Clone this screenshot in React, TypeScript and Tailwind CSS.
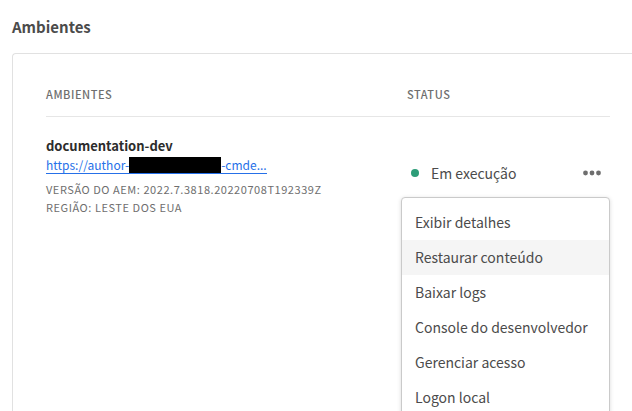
const menuItems = [
  "Exibir detalhes",
  "Restaurar conteúdo",
  "Baixar logs",
  "Console do desenvolvedor",
  "Gerenciar acesso",
  "Logon local",
];

function ActionMenu() {
  return (
    <div className="relative flex">
      <button
        type="button"
        aria-label="Mais ações"
        aria-haspopup="menu"
        aria-expanded="true"
        className="flex h-8 w-9 items-center justify-center"
      >
        <svg viewBox="0 0 20 6" className="h-[6px] w-5 fill-[#6e6e6e]" aria-hidden="true">
          <circle cx="3.5" cy="3" r="2.4" />
          <circle cx="10" cy="3" r="2.4" />
          <circle cx="16.5" cy="3" r="2.4" />
        </svg>
      </button>
      <div
        role="menu"
        className="absolute top-full right-0 mt-2 w-[209px] rounded border border-[#cacaca] bg-white py-[7px] shadow-[0_1px_4px_rgba(0,0,0,0.15)]"
      >
        {menuItems.map((item) => (
          <button
            key={item}
            type="button"
            role="menuitem"
            className={`flex h-[35px] w-full items-center px-[13px] text-sm whitespace-nowrap text-[#4b4b4b] ${
              item === "Restaurar conteúdo" ? "bg-[#f5f5f5]" : ""
            }`}
          >
            {item}
          </button>
        ))}
      </div>
    </div>
  );
}

export default function App() {
  return (
    <main className="flex h-screen flex-col overflow-hidden bg-white pl-3 font-['Noto_Sans_CJK_SC',sans-serif] text-[#4b4b4b]">
      <h1 className="py-[14px] text-[15px] leading-[25px] font-bold">Ambientes</h1>
      <section className="min-h-0 flex-1 rounded-tl border-t border-l border-[#e1e1e1] pt-[22px] pr-[22px] pl-[33px]">
        <table className="w-full table-fixed text-left">
          <thead>
            <tr className="border-b border-[#e6e6e6] text-[11px] leading-4 tracking-wider text-[#6e6e6e]">
              <th className="h-10 w-[64%] pb-1 font-medium">AMBIENTES</th>
              <th className="h-10 pb-1 font-medium">STATUS</th>
            </tr>
          </thead>
          <tbody>
            <tr>
              <td className="pt-[17px] align-top">
                <div className="text-[13px] leading-6 font-bold text-[#2c2c2c]">documentation-dev</div>
                <a
                  href="#author"
                  className="flex h-4 w-fit items-center border-b border-[#2670e8] text-xs leading-4 text-[#2670e8]"
                >
                  https://author-
                  <span className="h-4 w-[92px] bg-black" />
                  -cmde...
                </a>
                <div className="mt-[6px] text-[11px] leading-[18px] tracking-wider text-[#6e6e6e]">
                  <p>VERSÃO DO AEM: 2022.7.3818.20220708T192339Z</p>
                  <p>REGIÃO: LESTE DOS EUA</p>
                </div>
              </td>
              <td className="pt-10 align-top">
                <div className="flex items-center pl-1">
                  <span className="size-2 rounded-full bg-[#2d9d78]" />
                  <span className="ml-3 flex-1 text-sm leading-5">Em execução</span>
                  <ActionMenu />
                </div>
              </td>
            </tr>
          </tbody>
        </table>
      </section>
    </main>
  );
}
